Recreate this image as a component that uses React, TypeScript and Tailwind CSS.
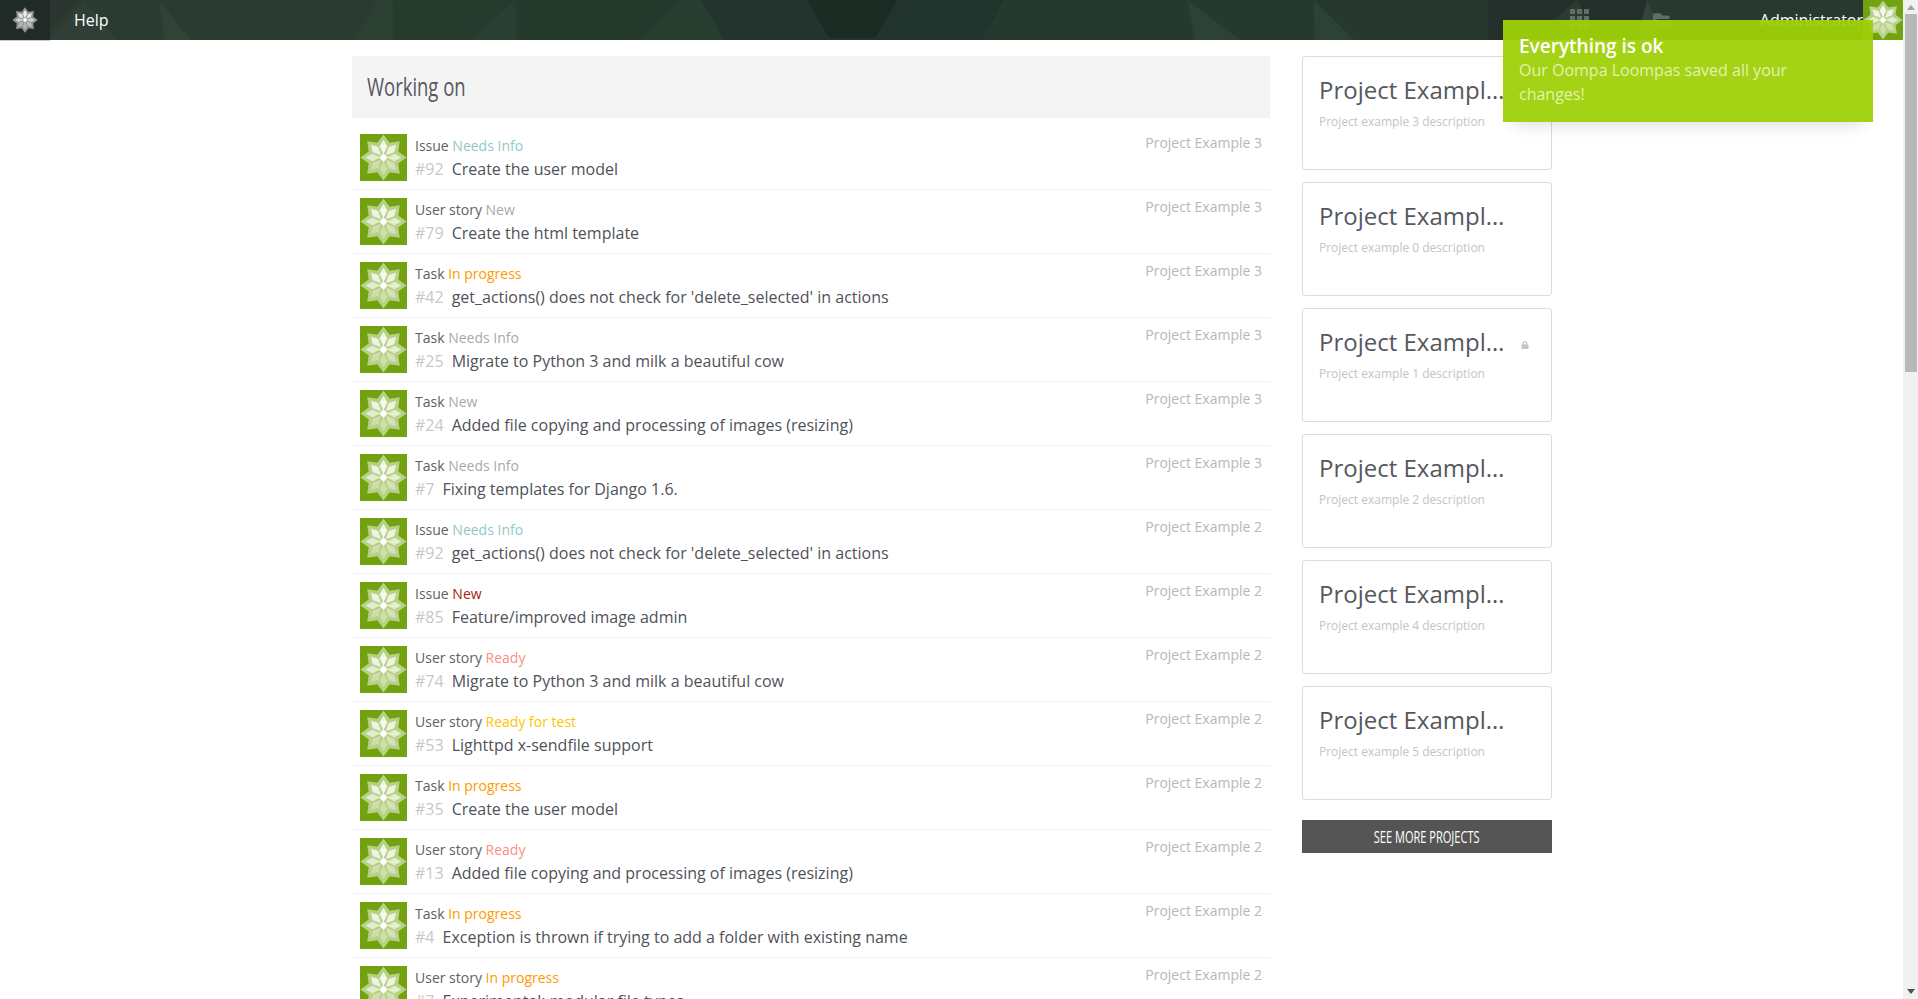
import { FaFolderOpen, FaLock } from "react-icons/fa";

const FONT = { fontFamily: '"Open Sans", sans-serif' };

// type + status colour per row, in list order
const ROWS = [
  { kind: "Issue", status: "Needs Info", color: "text-[#8fc9c4]", ref: 92, title: "Create the user model", project: "Project Example 3" },
  { kind: "User story", status: "New", color: "text-[#a9a9ad]", ref: 79, title: "Create the html template", project: "Project Example 3" },
  { kind: "Task", status: "In progress", color: "text-[#ff9900]", ref: 42, title: "get_actions() does not check for 'delete_selected' in actions", project: "Project Example 3" },
  { kind: "Task", status: "Needs Info", color: "text-[#a9a9ad]", ref: 25, title: "Migrate to Python 3 and milk a beautiful cow", project: "Project Example 3" },
  { kind: "Task", status: "New", color: "text-[#a9a9ad]", ref: 24, title: "Added file copying and processing of images (resizing)", project: "Project Example 3" },
  { kind: "Task", status: "Needs Info", color: "text-[#a9a9ad]", ref: 7, title: "Fixing templates for Django 1.6.", project: "Project Example 3" },
  { kind: "Issue", status: "Needs Info", color: "text-[#8fc9c4]", ref: 92, title: "get_actions() does not check for 'delete_selected' in actions", project: "Project Example 2" },
  { kind: "Issue", status: "New", color: "text-[#a51e12]", ref: 85, title: "Feature/improved image admin", project: "Project Example 2" },
  { kind: "User story", status: "Ready", color: "text-[#fc8e7e]", ref: 74, title: "Migrate to Python 3 and milk a beautiful cow", project: "Project Example 2" },
  { kind: "User story", status: "Ready for test", color: "text-[#ffc400]", ref: 53, title: "Lighttpd x-sendfile support", project: "Project Example 2" },
  { kind: "Task", status: "In progress", color: "text-[#ff9900]", ref: 35, title: "Create the user model", project: "Project Example 2" },
  { kind: "User story", status: "Ready", color: "text-[#fc8e7e]", ref: 13, title: "Added file copying and processing of images (resizing)", project: "Project Example 2" },
  { kind: "Task", status: "In progress", color: "text-[#ff9900]", ref: 4, title: "Exception is thrown if trying to add a folder with existing name", project: "Project Example 2" },
  { kind: "User story", status: "In progress", color: "text-[#ff9900]", ref: 7, title: "Experimental: modular file types", project: "Project Example 2" },
];

const PROJECTS = [
  { name: "Project Example 3", description: "Project example 3 description" },
  { name: "Project Example 0", description: "Project example 0 description" },
  { name: "Project Example 1", description: "Project example 1 description", locked: true },
  { name: "Project Example 2", description: "Project example 2 description" },
  { name: "Project Example 4", description: "Project example 4 description" },
  { name: "Project Example 5", description: "Project example 5 description" },
];

// nav background facets: [points, fill]
const FACETS: [string, string][] = [
  ["50,0 80,0 50,30", "#2d3531"],
  ["50,40 85,0 118,40", "#303f36"],
  ["160,0 192,40 166,40", "#2f4436"],
  ["358,40 380,0 396,0 396,40", "#2d4034"],
  ["396,0 520,0 473,40 396,40", "#263a2e"],
  ["473,40 520,0 520,40", "#2a3f33"],
  ["520,0 687,0 643,40 520,40", "#243a2d"],
  ["643,40 687,0 707,0 730,40", "#263d30"],
  ["707,0 813,0 835,40 730,40", "#22342d"],
  ["813,0 905,0 883,38 835,38", "#1b2c25"],
  ["835,38 883,38 883,40 835,40", "#22342d"],
  ["905,0 1012,0 990,40 883,40", "#20332c"],
  ["1012,0 1197,0 1204,40 990,40", "#25392f"],
  ["1197,0 1250,40 1204,40", "#2c4236"],
  ["1197,0 1324,0 1325,40 1250,40", "#25392f"],
  ["1324,0 1365,40 1325,40", "#2c4236"],
  ["1324,0 1500,0 1500,40 1365,40", "#27392f"],
  ["1500,0 1680,0 1680,40 1500,40", "#242f2b"],
  ["1540,40 1590,0 1610,40", "#2c3a32"],
  ["1660,0 1680,40 1650,40", "#33453b"],
  ["1660,0 1903,0 1903,40 1680,40", "#28392f"],
];

function polar(r: number, deg: number) {
  const a = ((deg - 90) * Math.PI) / 180;
  return `${(50 + r * Math.cos(a)).toFixed(2)},${(50 + r * Math.sin(a)).toFixed(2)}`;
}

const OUTER = Array.from({ length: 16 }, (_, i) => polar(i % 2 ? 34 : 49, i * 22.5)).join(" ");
const PETAL_OPACITY = [0.85, 0.75, 0.6, 0.4, 0.3, 0.3, 0.6, 0.75];

function Star({ className }: { className?: string }) {
  return (
    <svg viewBox="0 0 100 100" className={className}>
      <polygon points={OUTER} fill="#fff" fillOpacity={0.5} />
      {PETAL_OPACITY.map((o, i) => {
        const deg = i * 45;
        return (
          <polygon
            key={i}
            points={`${polar(7, deg)} ${polar(25, deg - 19)} ${polar(38, deg)} ${polar(25, deg + 19)}`}
            fill="#fff"
            fillOpacity={o}
          />
        );
      })}
      <polygon points={`${polar(9, 0)} ${polar(9, 90)} ${polar(9, 180)} ${polar(9, 270)}`} fill="#fff" />
    </svg>
  );
}

function NavBackground() {
  return (
    <svg className="absolute inset-0 w-full h-full" viewBox="0 0 1918 40" preserveAspectRatio="none">
      {FACETS.map(([points, fill]) => (
        <polygon key={points} points={points} fill={fill} />
      ))}
    </svg>
  );
}

function GridIcon() {
  return (
    <svg width="19" height="20" viewBox="0 0 19 20" fill="#5d7066" className="mr-[64px] mt-[-2px]">
      {[0, 7, 14].map((y) =>
        [0, 7, 14].map((x) => <rect key={`${x}-${y}`} x={x} y={y} width="5" height="5" />)
      )}
    </svg>
  );
}

function Row({ row }: { row: (typeof ROWS)[number] }) {
  return (
    <div className="h-16 shrink-0 flex gap-2 px-2 pt-2 border-b border-[#f2f2f2]">
      <div className="w-[47px] h-[47px] shrink-0 bg-[#70a30f] flex items-center justify-center">
        <Star className="w-[47px] h-[47px]" />
      </div>
      <div className="flex-1 min-w-0">
        <div className="flex justify-between text-sm leading-[20px] mt-[2px]">
          <div className="text-[#5c5f66]">
            {row.kind} <span className={row.color}>{row.status}</span>
          </div>
          <div className="text-[#b8b8b8] -mt-[3px]">{row.project}</div>
        </div>
        <div className="flex text-base leading-[24px] mt-[1px] text-[#4f5259]">
          <span className="text-[#c8c8c8] mr-2">#{row.ref}</span>
          <span>{row.title}</span>
        </div>
      </div>
    </div>
  );
}

function ProjectCard({ project }: { project: (typeof PROJECTS)[number] }) {
  return (
    <div className="h-[114px] rounded-[3px] border border-[#dcdcdc] px-4 pt-[16px]">
      <div className="flex items-center">
        <div className="w-[186px] truncate text-2xl leading-[34px] text-[#55585e]">{project.name}</div>
        {project.locked && <FaLock className="ml-[16px] mt-[6px] text-[8px] text-[#c4c4c4]" />}
      </div>
      <div className="mt-[6px] text-xs leading-[18px] text-[#c4c4c4]">{project.description}</div>
    </div>
  );
}

function Scrollbar() {
  return (
    <div className="w-[15px] shrink-0 bg-[#f1f1f1] flex flex-col items-center">
      <div className="h-[14px] flex items-center justify-center">
        <div className="border-x-[4px] border-x-transparent border-b-[5px] border-b-[#a3a3a3]" />
      </div>
      <div className="w-[12px] h-[358px] bg-[#b8b8b8]" />
      <div className="flex-1" />
      <div className="h-[15px] flex items-center justify-center">
        <div className="border-x-[4px] border-x-transparent border-t-[5px] border-t-[#505050]" />
      </div>
    </div>
  );
}

export default function App() {
  return (
    <div className="relative h-[999px] flex overflow-hidden bg-white" style={FONT}>
      <div className="flex-1 min-w-0 flex flex-col">
        <nav className="relative h-10 shrink-0 bg-[#2a3c31] flex items-stretch">
          <NavBackground />
          <div className="relative w-[50px] h-[41px] bg-[#202a27] border-b border-[#c8cccb] flex items-center justify-center">
            <Star className="w-[26px] h-[26px]" />
          </div>
          <div className="relative ml-6 flex items-center text-base text-white">Help</div>
          <div className="relative ml-auto flex items-center text-white">
            <GridIcon />
            <FaFolderOpen className="text-[20px] text-[#5d7066] mr-[87px]" />
            <span className="text-base">Administrator</span>
            <div className="w-10 h-10 bg-[#70a30f]">
              <Star className="w-10 h-10" />
            </div>
          </div>
        </nav>

        <div className="flex-1 min-h-0 flex pl-[352px] pt-4 gap-8">
          <main className="w-[918px] shrink-0">
            <div className="h-[62px] bg-[#f4f4f4] px-[15px] pb-[2px] flex items-center mb-2">
              <h1 className="text-[26px] text-[#555860] origin-left scale-x-[0.71] whitespace-nowrap">Working on</h1>
            </div>
            {ROWS.map((row, i) => (
              <Row key={i} row={row} />
            ))}
          </main>
          <aside className="w-[250px] shrink-0">
            <div className="flex flex-col gap-3">
              {PROJECTS.map((p) => (
                <ProjectCard key={p.name} project={p} />
              ))}
            </div>
            <button className="mt-5 w-full h-[33px] bg-[#555555] text-white text-base uppercase flex items-center justify-center">
              <span className="scale-x-[0.69] whitespace-nowrap">See more projects</span>
            </button>
          </aside>
        </div>
      </div>
      <Scrollbar />

      <div className="absolute left-[1503px] top-5 w-[370px] h-[102px] px-4 pt-[14px] bg-[#9ed107]/95 shadow-[0_14px_14px_-10px_rgba(0,0,0,0.12)] text-white">
        <div className="text-[19px] font-semibold leading-[24px]">Everything is ok</div>
        <div className="text-base leading-6 text-[#e4f2b0] w-[300px]">Our Oompa Loompas saved all your changes!</div>
      </div>
    </div>
  );
}
